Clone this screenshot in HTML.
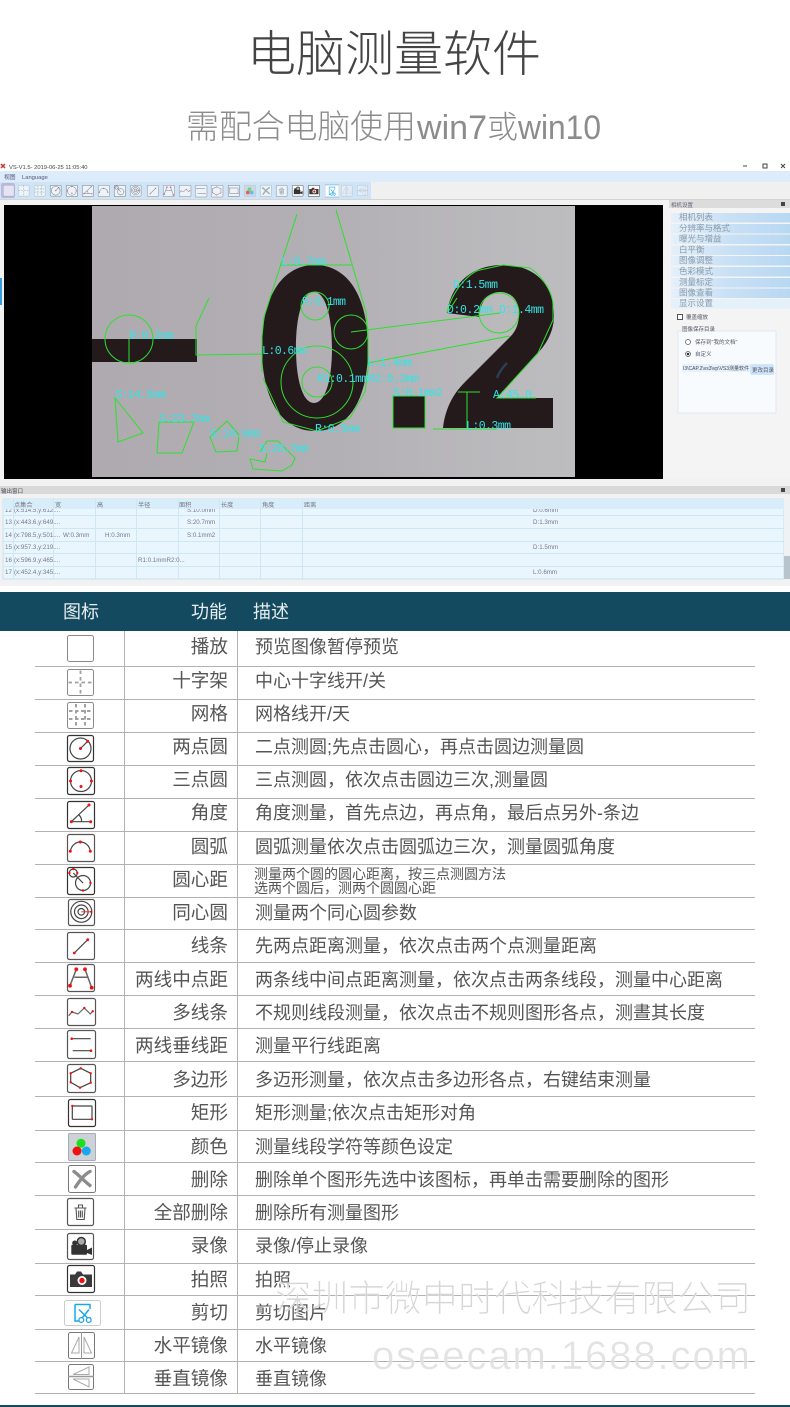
<!DOCTYPE html>
<html lang="zh"><head><meta charset="utf-8"><title>电脑测量软件</title>
<style>
html,body{margin:0;padding:0;background:#fff}
body{width:790px;height:1407px;overflow:hidden}
svg{display:block;font-family:"Liberation Sans","Noto Sans CJK SC",sans-serif}
.f{font-size:18.600px;fill:#555;text-anchor:end}
.d{font-size:18px;fill:#555}
.h{font-size:18px;fill:#e8eef0}
.l{font-family:"Liberation Mono",monospace;font-size:11.500px;fill:#35e4e4}
.g{fill:none;stroke:#2ee02e;stroke-width:1}
.p{font-size:8.500px;fill:#8a9aa8}
.c{font-size:6.200px;fill:#778}
.ln{stroke:#b2b2b2;stroke-width:1}
.b{fill:#fff;stroke:#555;stroke-width:1.200}
.b3{stroke:#333}.b7{stroke:#777;stroke-width:1}.b8{stroke:#8a8a8a;stroke-width:1}
.s{fill:none;stroke:#444;stroke-width:1.200}
</style></head><body>
<svg width="790" height="1407" viewBox="0 0 790 1407" xmlns="http://www.w3.org/2000/svg">
<defs>
<linearGradient id="pan" x1="0" y1="0" x2="1" y2="0"><stop offset="0" stop-color="#e4f0fa"/><stop offset=".5" stop-color="#c8e0f5"/><stop offset="1" stop-color="#b8d8f2"/></linearGradient>
<linearGradient id="ph" x1="0" y1="0" x2="1" y2="0"><stop offset="0" stop-color="#aeaab0"/><stop offset=".5" stop-color="#b3b0b5"/><stop offset="1" stop-color="#bdbdbf"/></linearGradient>
<g id="i1"><rect class="b b8" x=".5" y=".5" width="26" height="26" rx="2"/></g>
<g id="i2"><rect class="b b8" x=".5" y=".5" width="26" height="26" rx="2"/><path d="M13.500 1.500v24M1.500 13.500h24" stroke="#a0a0a0" stroke-width="1.800" stroke-dasharray="3.500 3" fill="none"/></g>
<g id="i3"><rect class="b b8" x=".5" y=".5" width="26" height="26" rx="2"/><path d="M2 9h23M2 17h23M9 2v23M18 2v23" stroke="#a0a0a0" stroke-width="2" stroke-dasharray="3.500 2.500" fill="none"/></g>
<g id="i4"><rect class="b b3" x=".5" y=".5" width="26" height="26" rx="2"/><circle class="s" cx="13.500" cy="13.500" r="10.500"/><path class="s" d="M13.500 13.500L20.700 6.300"/><circle cx="13.500" cy="13.500" r="1.500" fill="#e11"/><circle cx="20.700" cy="6.300" r="1.500" fill="#e11"/></g>
<g id="i5"><rect class="b b3" x=".5" y=".5" width="27" height="27" rx="2"/><circle class="s" cx="14" cy="14" r="10.500"/><g fill="#e11"><circle cx="14" cy="3.700" r="1.500"/><circle cx="3.600" cy="14" r="1.500"/><circle cx="24.400" cy="14" r="1.500"/><circle cx="14" cy="19.500" r="1.500"/></g></g>
<g id="i6"><rect class="b b3" x=".5" y=".5" width="27" height="27" rx="2"/><path class="s" d="M22 4L4.300 20.700H23.700M12 14a8 8 0 0 1 2.500 6.700"/><g fill="#e11"><circle cx="22" cy="4" r="1.500"/><circle cx="4.300" cy="20.700" r="1.500"/><circle cx="23.700" cy="20.700" r="1.500"/></g></g>
<g id="i7"><rect class="b" x=".5" y=".5" width="27" height="27" rx="2"/><path class="s" d="M3.300 17.300C4.500 11 9 8 13.300 8S22.500 11 23.300 17.300"/><g fill="#e11"><circle cx="3.300" cy="17.300" r="1.500"/><circle cx="13.300" cy="8" r="1.500"/><circle cx="23.300" cy="17.300" r="1.500"/></g></g>
<g id="i8"><rect class="b b3" x=".5" y=".5" width="27" height="27" rx="2"/><circle class="s" cx="6.300" cy="6" r="4"/><circle class="s" cx="16" cy="16" r="7.500"/><path class="s" d="M6.300 6L16 16"/><g fill="#e11"><circle cx="6.300" cy="2" r="1.200"/><circle cx="2.400" cy="6" r="1.200"/><circle cx="10.300" cy="6" r="1.200"/><circle cx="23.500" cy="16" r="1.200"/><circle cx="16" cy="23.500" r="1.200"/></g></g>
<g id="i9"><rect class="b" x=".5" y=".5" width="26" height="26" rx="2"/><circle class="s" cx="13.300" cy="12.800" r="10.500"/><circle class="s" cx="13.300" cy="12.800" r="6.800"/><circle class="s" cx="13.300" cy="12.800" r="3.300"/><path d="M13.300 12.800h10" stroke="#e33" fill="none"/><circle cx="23.300" cy="12.800" r="1.200" fill="#e11"/></g>
<g id="i10"><rect class="b" x=".5" y=".5" width="27" height="27" rx="2"/><path class="s" d="M20.700 7.700L7.300 21"/><circle cx="20.700" cy="7.700" r="1.400" fill="#e11"/><circle cx="7.300" cy="21" r="1.400" fill="#e11"/></g>
<g id="i11"><rect class="b" x=".5" y=".5" width="27" height="27" rx="2"/><path d="M9.300 5.300L3 21.700M18 5.300L24.700 23.700M7.300 13.300H20.700" stroke="#666" stroke-width="1.500" fill="none"/><g fill="#e11"><circle cx="9.300" cy="5.300" r="1.900"/><circle cx="18" cy="5.300" r="1.900"/><circle cx="3" cy="21.700" r="1.900"/><circle cx="24.700" cy="23.700" r="1.900"/></g></g>
<g id="i12"><rect class="b" x=".5" y=".5" width="28" height="27" rx="2"/><path d="M1.700 17.700L5 14L11 16L17.300 10L23.300 16L25.700 13.300" stroke="#666" stroke-width="1.200" fill="none"/><g fill="#e11"><circle cx="5" cy="14" r="1.200"/><circle cx="17.300" cy="10" r="1.200"/><circle cx="25.700" cy="13.300" r="1.200"/></g></g>
<g id="i13"><rect class="b" x=".5" y=".5" width="28" height="28" rx="2"/><path class="s" d="M4.700 8.700H23.700M5.700 20.700H24"/><circle cx="4.700" cy="8.700" r="1.300" fill="#e11"/><circle cx="24" cy="20.700" r="1.300" fill="#e11"/></g>
<g id="i14"><rect class="b" x=".5" y=".5" width="28" height="28" rx="2"/><path class="s" d="M13.700 4.300L23.700 9.300V18.700L13 23.700L3.700 18.300V9.300Z"/><g fill="#e11"><circle cx="13.700" cy="4.300" r="1.200"/><circle cx="23.700" cy="9.300" r="1.200"/><circle cx="23.700" cy="18.700" r="1.200"/><circle cx="13" cy="23.700" r="1.200"/><circle cx="3.700" cy="18.300" r="1.200"/><circle cx="3.700" cy="9.300" r="1.200"/></g></g>
<g id="i15"><rect class="b b3" x=".5" y=".5" width="27" height="27" rx="2"/><rect class="s" x="4.300" y="7" width="19.700" height="13.300" rx=".5"/><circle cx="4.300" cy="7" r="1.200" fill="#e11"/><circle cx="24" cy="20.300" r="1.200" fill="#e11"/></g>
<g id="i16"><rect x=".5" y=".5" width="27" height="27" fill="#cdd2d6" stroke="#aab" rx="1"/><circle cx="13" cy="10.300" r="4.500" fill="#1ce01c"/><circle cx="9" cy="18" r="4.500" fill="#f01010"/><circle cx="18.300" cy="18" r="4.500" fill="#18a8f0"/></g>
<g id="i17"><rect class="b b7" x=".5" y=".5" width="27" height="27" rx="2"/><path d="M6 6.500C11 10 16 16 22 20.500M22 6.500C17 9 12 15 7.500 22" stroke="#8c8c8c" stroke-width="3.400" stroke-linecap="round" fill="none"/></g>
<g id="i18"><rect class="b" x=".5" y=".5" width="26" height="27" rx="2"/><path d="M7.500 10h12M9 10l.8 11.500h7.400l.8-11.500M11.500 9.500V7h4v2.500M11.700 12.500v7M13.500 12.500v7M15.300 12.500v7" stroke="#555" stroke-width="1.100" fill="none"/></g>
<g id="i19"><rect class="b" x=".5" y=".5" width="26" height="26" rx="2"/><rect x="4.300" y="11.700" width="15.700" height="10" rx="1" fill="#333"/><path d="M20 17L25 14.500V22L20 20Z" fill="#333"/><circle cx="7.700" cy="10" r="2.500" fill="#333"/><circle cx="14.300" cy="8.500" r="4" fill="#aaa" stroke="#333" stroke-width="1.500"/></g>
<g id="i20"><rect class="b b3" x=".5" y=".5" width="27" height="27" rx="2"/><path d="M3 9.500H8L10 6.500H14L16 9.500H25V22H3Z" fill="#3a3a3a"/><circle cx="15" cy="15.500" r="4.500" fill="#fff"/><circle cx="15" cy="15.500" r="2.700" fill="#e11"/></g>
<g id="i21"><rect x=".5" y=".5" width="36" height="25" rx="2" fill="#fff" stroke="#ccc"/><path d="M11 4.500V21H15M11 4.500H26V9M26 17V21H25" stroke="#1aa5ec" stroke-width="1.500" fill="none"/><path d="M15 9.500L24.700 19M25 9.500L17.300 19" stroke="#1aa5ec" stroke-width="1.500" fill="none"/><circle cx="17.300" cy="20" r="2.400" fill="#fff" stroke="#1aa5ec" stroke-width="1.300"/><circle cx="24.700" cy="20" r="2.400" fill="#fff" stroke="#1aa5ec" stroke-width="1.300"/></g>
<g id="i22"><rect class="b b7" x=".5" y=".5" width="26" height="26" rx="2"/><path d="M13.500 0V27" stroke="#999"/><path d="M11 5V21H3.500ZM16 5V21H23.500Z" fill="#fff" stroke="#aaa"/></g>
<g id="i23"><rect class="b b7" x=".5" y=".5" width="25" height="25" rx="2"/><path d="M0 12.500H26" stroke="#999" stroke-width="1.500"/><path d="M21 3V10.500H5ZM21 15V23L5 15Z" fill="#fff" stroke="#aaa"/></g>
</defs>

<!-- Titles -->
<text x="247" y="71" font-size="49" font-weight="200" fill="#444" textLength="294">电脑测量软件</text>
<g font-weight="200" fill="#8c8c8c">
<text x="186" y="138" font-size="33" textLength="230">需配合电脑使用</text>
<text x="417" y="139" font-size="34" textLength="70">win7</text>
<text x="487" y="138" font-size="31">或</text>
<text x="518" y="139" font-size="34" textLength="83" lengthAdjust="spacingAndGlyphs">win10</text>
</g>

<!-- Software window -->
<rect x="0" y="171" width="790" height="11" fill="#dcecfa"/>
<rect x="0" y="182" width="790" height="18" fill="#f0f0f0"/>
<rect x="0" y="182" width="371" height="17" fill="#cfe4f6"/>
<rect x="0" y="199" width="790" height="6" fill="#eeeeee"/>
<rect x="0" y="199" width="790" height="1" fill="#d4d4d4"/>
<path d="M1 164l4 4M5 164l-4 4" stroke="#c33" stroke-width="1.500"/>
<text x="9" y="169" font-size="5.800" fill="#444">VS-V1.5- 2019-06-25 11:05:40</text>
<text x="4" y="179" font-size="5.800" fill="#557">视图</text>
<text x="22" y="179" font-size="5.800" fill="#557">Language</text>
<path d="M743 166h4" stroke="#444"/><rect x="763" y="164" width="4" height="4" fill="none" stroke="#444"/><path d="M781 164l4 4M785 164l-4 4" stroke="#444"/>
<rect x="1" y="183" width="14" height="15" fill="#b9b9e0" rx="2"/>
<g opacity=".62">
<use href="#i1" transform="translate(3,185) scale(.42)"/>
<use href="#i2" transform="translate(18,185) scale(.42)"/>
<use href="#i3" transform="translate(34,185) scale(.42)"/>
<use href="#i4" transform="translate(50,185) scale(.42)"/>
<use href="#i5" transform="translate(66,185) scale(.42)"/>
<use href="#i6" transform="translate(82,185) scale(.42)"/>
<use href="#i7" transform="translate(98,185) scale(.42)"/>
<use href="#i8" transform="translate(114,185) scale(.42)"/>
<use href="#i9" transform="translate(130,185) scale(.42)"/>
<use href="#i10" transform="translate(147,185) scale(.42)"/>
<use href="#i11" transform="translate(163,185) scale(.42)"/>
<use href="#i12" transform="translate(179,185) scale(.42)"/>
<use href="#i13" transform="translate(195,185) scale(.42)"/>
<use href="#i14" transform="translate(211,185) scale(.42)"/>
<use href="#i15" transform="translate(228,185) scale(.42)"/>
<use href="#i16" transform="translate(244,185) scale(.42)"/>
<use href="#i17" transform="translate(260,185) scale(.42)"/>
<use href="#i18" transform="translate(276,185) scale(.42)"/>
</g>
<use href="#i19" transform="translate(292,185) scale(.42)"/>
<use href="#i20" transform="translate(308,185) scale(.42)"/>
<rect x="325" y="184" width="14" height="14" fill="#9fd4f4"/>
<use href="#i21" transform="translate(325,185) scale(.38,.46)"/>
<g opacity=".4">
<use href="#i22" transform="translate(341,185) scale(.42)"/>
<use href="#i23" transform="translate(357,185) scale(.42)"/>
</g>
<rect x="0" y="200" width="668" height="286" fill="#f2f2f2"/>
<rect x="0" y="278" width="2" height="27" fill="#3a9ae0"/>

<!-- Viewport -->
<rect x="4" y="205" width="659" height="274" fill="#000"/>
<rect x="92" y="206" width="483" height="271" fill="url(#ph)"/>
<path d="M90 339H197V362H92Z" fill="#241a1c"/>
<rect x="90" y="339" width="2" height="23" fill="#000"/>
<path fill-rule="evenodd" fill="#241a1c" d="M315 265C347 265 368 295 368 348C368 402 347 431 315 431C283 431 262 402 262 348C262 295 283 265 315 265ZM314 292C303 292 296 315 296 348C296 381 303 403 314 403C325 403 332 381 332 348C332 315 325 292 314 292Z"/>
<path fill="#241a1c" d="M443 428C445 410 452 395 465 382L510 337C517 330 519 322 519 313C519 300 511 292 500 292C487 292 480 303 479 317L447 313C452 280 475 265 503 265C535 265 554 285 554 315C554 330 548 342 538 353L497 398H553V428Z"/>
<path d="M497 378C499 372 503 367 507 363" stroke="#2d3d52" stroke-width="2.500" fill="none"/>
<rect x="393" y="396" width="32" height="32" fill="#241a1c"/>

<!-- Green measurements -->
<g class="g">
<circle cx="129" cy="339" r="24"/><path d="M129 339V363"/>
<path d="M209 298L196 326V355L262 354M262 337V372"/>
<path d="M297 214L264 317M281 265H352M352 264L336 210"/>
<path d="M352 264L366 312L368 338L368 370L365 392L350 418L317 431L283 422L263 378"/>
<path d="M264 317L262 337"/>
<circle cx="315" cy="306" r="14"/><circle cx="317" cy="382" r="36"/><circle cx="317" cy="382" r="15"/>
<circle cx="351" cy="332" r="17"/><path d="M351 332L500 313"/>
<circle cx="499" cy="313" r="20"/><path d="M368 363L510 336M457 298L448 312"/>
<path d="M447 313C452 290 470 272 480 270L503 265L530 268C545 278 553 295 553 305V320L538 353L497 398H536"/>
<path d="M458 392H480M467 392V428M433 429H497"/>
<rect x="393" y="396" width="32" height="32"/>
<path d="M115 398L143 433L118 442Z"/>
<path d="M159 422H194L182 453H157Z"/>
<path d="M227 421L239 435L237 451L216 452L210 437Z"/>
<path d="M260 452L267 441H278L295 458L292 465L282 471L253 469L250 459L265 462L267 453"/>
</g>
<g class="l">
<text x="129" y="339" textLength="45">R:0.2mm</text>
<text x="281" y="265" textLength="45">L:0.7mm</text>
<text x="302" y="305" textLength="44">R:0.1mm</text>
<text x="262" y="354" textLength="45">L:0.6mm</text>
<text x="115" y="398" textLength="51">S:14.5mm</text>
<text x="159" y="422" textLength="51">S:23.7mm</text>
<text x="210" y="437" textLength="51">S:16.0mm</text>
<text x="259" y="452" textLength="50">S:20.7mm</text>
<text x="317" y="382" textLength="102">R1:0.1mmR2:0.3mm</text>
<text x="315" y="432" textLength="45">R:0.5mm</text>
<text x="367" y="366" textLength="45">L:1.4mm</text>
<text x="393" y="396" textLength="50">S:0.1mm2</text>
<text x="466" y="429" textLength="45">L:0.3mm</text>
<text x="493" y="398" textLength="39">A:45.0</text>
<text x="453" y="288" textLength="45">D:1.5mm</text>
<text x="447" y="313" textLength="46">D:0.2mm</text>
<text x="499" y="313" textLength="45">D:1.4mm</text>
</g>

<!-- Right panel -->
<rect x="663" y="200" width="127" height="286" fill="#f4f4f4"/>
<rect x="669" y="200" width="121" height="8" fill="#dcdcdc"/>
<text x="671" y="207" font-size="5.500" fill="#667">相机设置</text>
<rect x="781" y="202" width="4" height="4" fill="#444"/>
<rect x="671" y="213" width="119" height="9.500" fill="url(#pan)"/>
<rect x="671" y="224" width="119" height="9.500" fill="url(#pan)"/>
<rect x="671" y="234.500" width="119" height="9.500" fill="url(#pan)"/>
<rect x="671" y="245.500" width="119" height="9.500" fill="url(#pan)"/>
<rect x="671" y="256" width="119" height="9.500" fill="url(#pan)"/>
<rect x="671" y="267" width="119" height="9.500" fill="url(#pan)"/>
<rect x="671" y="278" width="119" height="9.500" fill="url(#pan)"/>
<rect x="671" y="288.500" width="119" height="9.500" fill="url(#pan)"/>
<rect x="671" y="299" width="119" height="9.500" fill="#e4f0fa"/>
<g class="p">
<text x="679" y="220">相机列表</text>
<text x="679" y="231">分辨率与格式</text>
<text x="679" y="241.500">曝光与增益</text>
<text x="679" y="252.500">白平衡</text>
<text x="679" y="263">图像调整</text>
<text x="679" y="274">色彩模式</text>
<text x="679" y="285">测量标定</text>
<text x="679" y="295.500">图像查看</text>
<text x="679" y="306">显示设置</text>
</g>
<rect x="677.500" y="314.500" width="5" height="5" fill="#fff" stroke="#555"/>
<text x="686" y="319" font-size="5.500" fill="#556">覆盖缩放</text>
<rect x="678" y="331" width="98" height="82" fill="#f8fbfd" stroke="#dfe8f0"/>
<text x="682" y="331" font-size="5.500" fill="#556">图像保存目录</text>
<circle cx="688" cy="342" r="2.500" fill="#fff" stroke="#555" stroke-width=".7"/>
<text x="695" y="344" font-size="5.500" fill="#556">保存到"我的文档"</text>
<circle cx="688" cy="354" r="2.500" fill="#fff" stroke="#555" stroke-width=".7"/><circle cx="688" cy="354" r="1.300" fill="#333"/>
<text x="695" y="356" font-size="5.500" fill="#556">自定义</text>
<rect x="682" y="364" width="68" height="8" fill="#e4f2fc"/>
<text x="683" y="370" font-size="5" fill="#445">I3\CAP.2\vs3\vp\VS3测量软件</text>
<rect x="750" y="364" width="24" height="11" rx="2" fill="#cfe6f8"/>
<text x="752" y="372" font-size="5.500" fill="#556">更改目录</text>

<!-- Output panel -->
<rect x="0" y="479" width="790" height="113" fill="#f2f2f2"/>
<rect x="0" y="486" width="790" height="8" fill="#d9d9d9"/>
<text x="1" y="493" font-size="5.500" fill="#445">输出窗口</text>
<rect x="781" y="488" width="4" height="4" fill="#444"/>
<rect x="3" y="499" width="781" height="80" fill="#eaf6fe" stroke="#c6e3f3"/>
<g class="c">
<text x="5" y="512">12</text><text x="14" y="512">(x:514.5,y:612....</text><text x="187" y="512">S:10.0mm</text><text x="533" y="512">D:0.6mm</text>
</g>
<rect x="3" y="499" width="781" height="10" fill="#d7edfa"/>
<g stroke="#cfe6f4" stroke-width="1">
<path d="M13.500 499V579M53.500 499V579M95.500 499V579M136.500 499V579M178.500 499V579M219.500 499V579M260.500 499V579M302.500 499V579"/>
<path d="M3 515.500H784M3 528.500H784M3 541.500H784M3 553.500H784M3 566.500H784"/>
</g>
<g class="c">
<text x="14" y="507">点集合</text><text x="55" y="507">宽</text><text x="97" y="507">高</text><text x="138" y="507">半径</text><text x="179" y="507">面积</text><text x="221" y="507">长度</text><text x="262" y="507">角度</text><text x="304" y="507">距离</text>
<text x="5" y="524">13</text><text x="14" y="524">(x:443.6,y:649....</text><text x="187" y="524">S:20.7mm</text><text x="533" y="524">D:1.3mm</text>
<text x="5" y="537">14</text><text x="14" y="537">(x:798.5,y:501....</text><text x="63" y="537">W:0.3mm</text><text x="105" y="537">H:0.3mm</text><text x="187" y="537">S:0.1mm2</text>
<text x="5" y="549">15</text><text x="14" y="549">(x:957.3,y:219....</text><text x="533" y="549">D:1.5mm</text>
<text x="5" y="562">16</text><text x="14" y="562">(x:596.9,y:465....</text><text x="138" y="562">R1:0.1mmR2:0...</text>
<text x="5" y="574">17</text><text x="14" y="574">(x:452.4,y:345....</text><text x="533" y="574">L:0.6mm</text>
</g>
<rect x="784" y="556" width="6" height="23" fill="#b7c4cd"/>
<rect x="784" y="499" width="6" height="57" fill="#eef2f4"/>
<rect x="0" y="586" width="790" height="6" fill="#fff"/>

<!-- Function table -->
<rect x="0" y="592" width="790" height="39" fill="#134a5f"/>
<text class="h" x="63" y="618">图标</text>
<text class="h" x="191" y="618">功能</text>
<text class="h" x="253" y="618">描述</text>
<g class="ln">
<path d="M35 666.500H755M35 699.500H755M35 732.500H755M35 765.500H755M35 798.500H755M35 831.500H755M35 864.500H755M35 897.500H755M35 929.500H755M35 962.500H755M35 995.500H755M35 1028.500H755M35 1061.500H755M35 1096.500H755M35 1130.500H755M35 1162.500H755M35 1195.500H755M35 1229.500H755M35 1263.500H755M35 1295.500H755M35 1329.500H755M35 1361.500H755M35 1393.500H755"/>
<path d="M124.500 631V1393M237.500 631V1393"/>
</g>
<rect x="0" y="1405" width="790" height="2" fill="#134a5f"/>

<use href="#i1" x="67" y="635"/><use href="#i2" x="67" y="669"/><use href="#i3" x="67" y="702"/>
<use href="#i4" x="67" y="735"/><use href="#i5" x="67" y="767"/><use href="#i6" x="67" y="801"/>
<use href="#i7" x="67" y="834"/><use href="#i8" x="67" y="867"/><use href="#i9" x="68" y="899"/>
<use href="#i10" x="67" y="932"/><use href="#i11" x="67" y="964"/><use href="#i12" x="67" y="998"/>
<use href="#i13" x="67" y="1030"/><use href="#i14" x="67" y="1064"/><use href="#i15" x="68" y="1099"/>
<use href="#i16" x="68" y="1133"/><use href="#i17" x="68" y="1165"/><use href="#i18" x="67" y="1198"/>
<use href="#i19" x="67" y="1233"/><use href="#i20" x="67" y="1265"/><use href="#i21" x="64" y="1300"/>
<use href="#i22" x="68" y="1332"/><use href="#i23" x="68" y="1364"/>

<text class="f" x="228" y="653">播放</text><text class="d" x="255" y="653">预览图像暂停预览</text>
<text class="f" x="228" y="687">十字架</text><text class="d" x="255" y="687">中心十字线开/关</text>
<text class="f" x="228" y="720">网格</text><text class="d" x="255" y="720">网格线开/天</text>
<text class="f" x="228" y="753">两点圆</text><text class="d" x="255" y="753">二点测圆;先点击圆心，再点击圆边测量圆</text>
<text class="f" x="228" y="786">三点圆</text><text class="d" x="255" y="786">三点测圆，依次点击圆边三次,测量圆</text>
<text class="f" x="228" y="819">角度</text><text class="d" x="255" y="819">角度测量，首先点边，再点角，最后点另外-条边</text>
<text class="f" x="228" y="853">圆弧</text><text class="d" x="255" y="853">圆弧测量依次点击圆弧边三次，测量圆弧角度</text>
<text class="f" x="228" y="886">圆心距</text>
<text x="254" y="879" font-size="14" fill="#555">测量两个圆的圆心距离，按三点测圆方法</text>
<text x="254" y="893" font-size="14" fill="#555">选两个圆后，测两个圆圆心距</text>
<text class="f" x="228" y="919">同心圆</text><text class="d" x="255" y="919">测量两个同心圆参数</text>
<text class="f" x="228" y="952">线条</text><text class="d" x="255" y="952">先两点距离测量，依次点击两个点测量距离</text>
<text class="f" x="228" y="986">两线中点距</text><text class="d" x="255" y="986">两条线中间点距离测量，依次点击两条线段，测量中心距离</text>
<text class="f" x="228" y="1019">多线条</text><text class="d" x="255" y="1019">不规则线段测量，依次点击不规则图形各点，测晝其长度</text>
<text class="f" x="228" y="1052">两线垂线距</text><text class="d" x="255" y="1052">测量平行线距离</text>
<text class="f" x="228" y="1086">多边形</text><text class="d" x="255" y="1086">多迈形测量，依次点击多边形各点，右键结束测量</text>
<text class="f" x="228" y="1119">矩形</text><text class="d" x="255" y="1119">矩形测量;依次点击矩形对角</text>
<text class="f" x="228" y="1153">颜色</text><text class="d" x="255" y="1153">测量线段学符等颜色设定</text>
<text class="f" x="228" y="1186">删除</text><text class="d" x="255" y="1186">删除单个图形先选中该图标，再单击需要删除的图形</text>
<text class="f" x="228" y="1219">全部删除</text><text class="d" x="255" y="1219">删除所有测量图形</text>
<text class="f" x="228" y="1252">录像</text><text class="d" x="255" y="1252">录像/停止录像</text>
<text class="f" x="228" y="1286">拍照</text><text class="d" x="255" y="1286">拍照</text>
<text class="f" x="228" y="1319">剪切</text><text class="d" x="255" y="1319">剪切图片</text>
<text class="f" x="228" y="1352">水平镜像</text><text class="d" x="255" y="1352">水平镜像</text>
<text class="f" x="228" y="1385">垂直镜像</text><text class="d" x="255" y="1385">垂直镜像</text>

<!-- Watermark -->
<text x="275" y="1311" font-size="36.500" font-weight="200" fill="#cfcfcf" fill-opacity=".85" stroke="#fff" stroke-width=".3" textLength="476">深圳市微申时代科技有限公司</text>
<text x="372" y="1369" font-size="40" fill="#dcdcdc" fill-opacity=".8" stroke="#fff" stroke-width=".3" textLength="378">oseecam.1688.com</text>
</svg>
</body></html>
